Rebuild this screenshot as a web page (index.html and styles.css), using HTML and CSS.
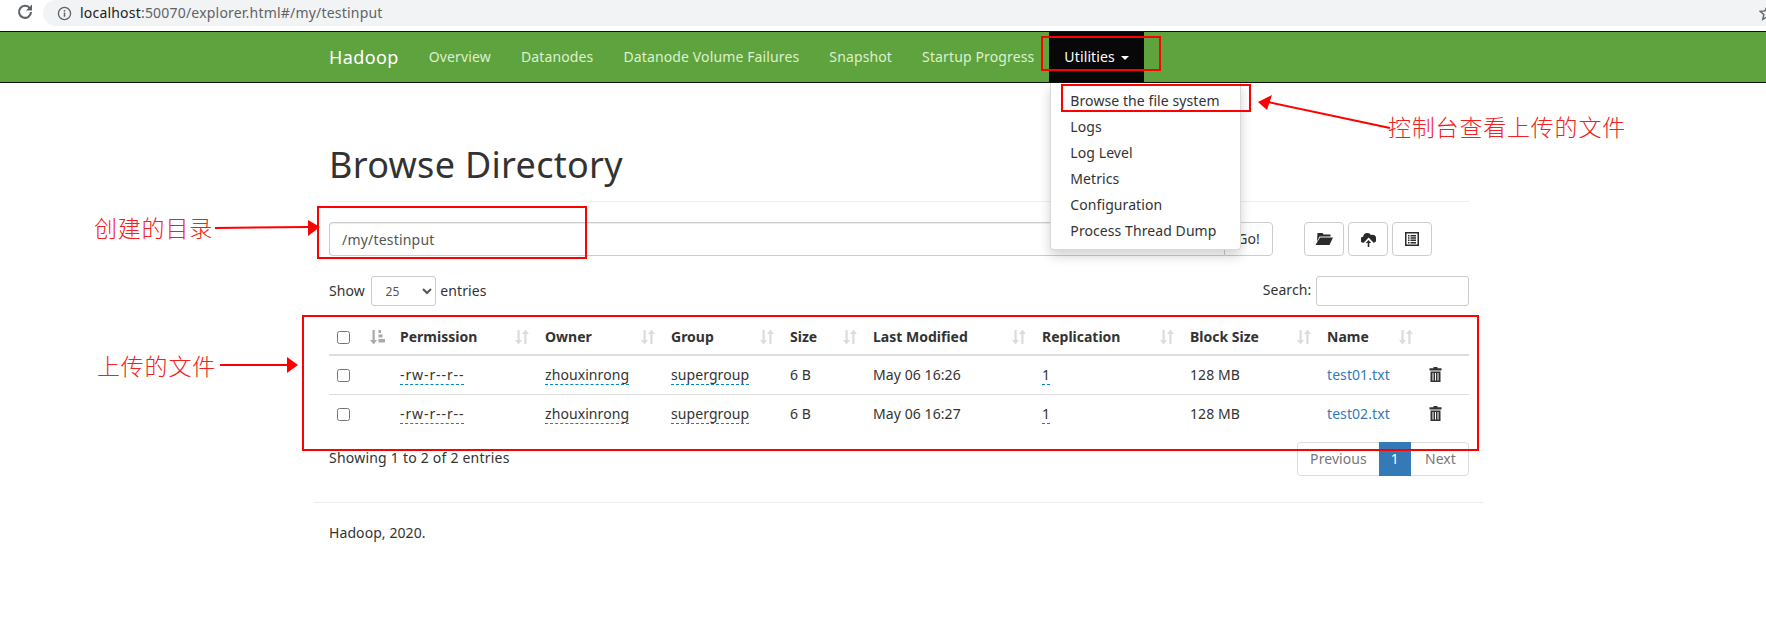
FILE: index.html
```html
<!DOCTYPE html>
<html lang="en">
  <head>
    <meta charset="UTF-8" />
    <title>Browsing HDFS</title>
    <link rel="stylesheet" href="styles.css">
  </head>
  <body>
    <svg class="sprite" xmlns="http://www.w3.org/2000/svg">
      <symbol id="sort" viewBox="0 0 14 16">
        <path d="M2.500 1h2.200v10H7l-3.400 4.400L0 11h2.500z" />
        <path d="M9.300 15h2.200V5H14L10.400.6 7 5h2.300z" />
      </symbol>
      <symbol id="sort-active" viewBox="0 0 15 16">
        <path d="M2.500 1h2.200v10H7l-3.400 4.400L0 11h2.500z" />
        <path d="M8.500 1h2.500v3H8.500zM8.500 5.500h4v3h-4zM8.500 10h6.500v3.500H8.500z" />
      </symbol>
      <symbol id="trash" viewBox="0 0 13 15">
        <path d="M4.500 0h4v1.200h4V3.500H.5V1.200h4zM1.500 4.500h10V15h-10zM3.500 6v7.500h1V6zM6 6v7.500h1V6zM8.500 6v7.500h1V6z" fill-rule="evenodd" />
      </symbol>
    </svg>

    <div class="chrome-bar">
      <svg class="reload" viewBox="0 0 16 16">
        <path d="M13 4.500A6 6 0 1 0 14 8" fill="none" stroke="#5f6368" stroke-width="2.100" />
        <path d="M15 .5v6H9z" fill="#5f6368" />
      </svg>
      <div class="omnibox">
        <svg class="info" viewBox="0 0 16 16">
          <circle cx="8" cy="8" r="6.500" fill="none" stroke="#5f6368" stroke-width="1.400" />
          <path d="M7.200 7h1.600v4.500H7.200zM7.200 4.200h1.600v1.600H7.200z" fill="#5f6368" />
        </svg>
        <span class="url">localhost<span class="url-rest">:50070/explorer.html#/my/testinput</span></span>
        <svg class="star" viewBox="0 0 16 16">
          <path d="M8 1.500l2 4.400 4.700.5-3.500 3.200 1 4.700L8 11.900l-4.200 2.400 1-4.700-3.500-3.200 4.700-.5z" fill="none" stroke="#5f6368" stroke-width="1.400" />
        </svg>
      </div>
    </div>

    <nav class="navbar">
      <div class="navbar-inner">
        <a class="brand">Hadoop</a>
        <ul class="nav">
          <li><a>Overview</a></li>
          <li><a>Datanodes</a></li>
          <li><a>Datanode Volume Failures</a></li>
          <li><a>Snapshot</a></li>
          <li><a>Startup Progress</a></li>
          <li class="open">
            <a>Utilities <span class="caret"></span></a>
            <ul class="dropdown">
              <li>Browse the file system</li>
              <li>Logs</li>
              <li>Log Level</li>
              <li>Metrics</li>
              <li>Configuration</li>
              <li>Process Thread Dump</li>
            </ul>
          </li>
        </ul>
      </div>
    </nav>

    <main class="container">
      <div class="page-header">
        <h1>Browse Directory</h1>
      </div>

      <div class="toolbar">
        <div class="input-group">
          <input class="path-input" type="text" value="/my/testinput" />
          <button class="btn go-btn">Go!</button>
        </div>
        <div class="tools">
          <button class="btn tool-btn">
            <svg class="icon-folder" viewBox="0 0 18 12">
              <path d="M2.500 0h5l1 1.500h7V3.500H4.500L2 8.500z" />
              <path d="M5 4.500h13L14.500 12H0.500z" />
            </svg>
          </button>
          <button class="btn tool-btn">
            <svg class="icon-upload" viewBox="0 0 15 15">
              <path d="M2.800 10.800a3 3 0 0 1-.6-6A4.200 4.200 0 0 1 10 3a3.300 3.300 0 0 1 2.600 7.800l-5-5.400z" />
              <path d="M6.700 15v-4H4.800l2.700-3 2.700 3H8.300v4z" />
            </svg>
          </button>
          <button class="btn tool-btn">
            <svg class="icon-list" viewBox="0 0 14 14">
              <path d="M0 0h14v14H0zM1.500 1.500v11h11v-11zM3 3h1.500v1.500H3zM5.500 3H11v1.500H5.500zM3 5.300h1.500v1.500H3zM5.500 5.300H11v1.500H5.500zM3 7.600h1.500v1.500H3zM5.500 7.600H11v1.500H5.500zM3 9.900h1.500v1.500H3zM5.500 9.900H11v1.500H5.500z" fill-rule="evenodd" />
            </svg>
          </button>
        </div>
      </div>

      <div class="table-controls">
        <label class="length">Show
          <select class="length-select"><option>25</option></select>
          entries</label>
        <label class="search">Search: <input class="search-input" type="text" /></label>
      </div>

      <table class="files">
        <colgroup>
          <col class="c-check" /><col class="c-sort" /><col class="c-perm" /><col class="c-owner" />
          <col class="c-group" /><col class="c-size" /><col class="c-date" /><col class="c-repl" />
          <col class="c-block" /><col class="c-name" /><col class="c-del" />
        </colgroup>
        <thead>
          <tr>
            <th><input type="checkbox" /></th>
            <th><svg class="sort-active"><use href="#sort-active" /></svg></th>
            <th><div class="th-in">Permission<svg class="sort"><use href="#sort" /></svg></div></th>
            <th><div class="th-in">Owner<svg class="sort"><use href="#sort" /></svg></div></th>
            <th><div class="th-in">Group<svg class="sort"><use href="#sort" /></svg></div></th>
            <th><div class="th-in">Size<svg class="sort"><use href="#sort" /></svg></div></th>
            <th><div class="th-in">Last Modified<svg class="sort"><use href="#sort" /></svg></div></th>
            <th><div class="th-in">Replication<svg class="sort"><use href="#sort" /></svg></div></th>
            <th><div class="th-in">Block Size<svg class="sort"><use href="#sort" /></svg></div></th>
            <th><div class="th-in">Name<svg class="sort"><use href="#sort" /></svg></div></th>
            <th></th>
          </tr>
        </thead>
        <tbody>
          <tr>
            <td><input type="checkbox" /></td>
            <td></td>
            <td><span class="editable perm">-rw-r--r--</span></td>
            <td><span class="editable">zhouxinrong</span></td>
            <td><span class="editable">supergroup</span></td>
            <td>6 B</td>
            <td>May 06 16:26</td>
            <td><span class="editable">1</span></td>
            <td>128 MB</td>
            <td><a class="file-link">test01.txt</a></td>
            <td><svg class="trash"><use href="#trash" /></svg></td>
          </tr>
          <tr>
            <td><input type="checkbox" /></td>
            <td></td>
            <td><span class="editable perm">-rw-r--r--</span></td>
            <td><span class="editable">zhouxinrong</span></td>
            <td><span class="editable">supergroup</span></td>
            <td>6 B</td>
            <td>May 06 16:27</td>
            <td><span class="editable">1</span></td>
            <td>128 MB</td>
            <td><a class="file-link">test02.txt</a></td>
            <td><svg class="trash"><use href="#trash" /></svg></td>
          </tr>
        </tbody>
      </table>

      <div class="table-footer">
        <div class="info-text">Showing 1 to 2 of 2 entries</div>
        <ul class="pagination">
          <li>Previous</li>
          <li class="active">1</li>
          <li class="next">Next</li>
        </ul>
      </div>

      <hr class="footer-rule" />
      <footer class="footer">Hadoop, 2020.</footer>
    </main>

    <!-- red notes drawn over the screenshot -->
    <svg class="notes" viewBox="0 0 1766 642">
      <g fill="none" stroke="#f00" stroke-width="2">
        <rect x="318" y="207" width="268" height="51" />
        <rect x="1042" y="37" width="118" height="33" />
        <rect x="1062" y="85" width="188" height="26" />
        <rect x="303" y="316" width="1175" height="134" />
        <path d="M215 228L309 227" />
        <path d="M1390 128L1268 102" />
        <path d="M220 365H288" />
      </g>
      <g fill="#f00">
        <polygon points="320,227 308,220 308,236" />
        <polygon points="1258,102 1272,95 1267,110" />
        <polygon points="298,365 287,357 287,373" />
      </g>
    </svg>
    <span class="note note-dir">创建的目录</span>
    <span class="note note-files">上传的文件</span>
    <span class="note note-console">控制台查看上传的文件</span>
  </body>
</html>
```

FILE: styles.css
```css
body {
  font-family: "Noto Sans", "Noto Sans CJK SC", sans-serif;
  font-size: 14px;
  line-height: 20px;
  letter-spacing: 0.08px;
  color: #333;
  background-color: white;
  margin: 0;
  padding: 0;
  position: relative;
  height: 642px;
  overflow: hidden;
}
.sprite {
  display: none;
}
.chrome-bar {
  height: 31px;
  display: flex;
  align-items: flex-start;
}
.reload {
  width: 16px;
  height: 16px;
  margin: 4px 10px 0 17px;
  flex: none;
}
.omnibox {
  flex: 1;
  height: 26px;
  background-color: #f1f3f4;
  border-radius: 13px 0 0 13px;
  display: flex;
  align-items: center;
  padding-left: 14px;
}
.info {
  width: 15px;
  height: 15px;
  margin-right: 8px;
}
.url {
  color: #202124;
  font-size: 14px;
  letter-spacing: 0.2px;
  flex: 1;
}
.url-rest {
  color: #5f6368;
}
.star {
  width: 16px;
  height: 16px;
  margin-right: -9px;
}
.navbar {
  height: 50px;
  background-color: #5fa33e;
  border-top: 1px solid #101010;
  border-bottom: 1px solid #101010;
}
.navbar-inner {
  margin-left: 329px;
  display: flex;
  height: 50px;
}
.brand {
  color: white;
  font-size: 18px;
  line-height: 50px;
  letter-spacing: 0.4px;
  margin-right: 15px;
}
.nav {
  display: flex;
  list-style: none;
  margin: 0;
  padding: 0;
}
.nav > li {
  position: relative;
}
.nav > li > a {
  display: block;
  padding: 15px;
  color: #ddf0cf;
  letter-spacing: 0.13px;
}
.nav > li.open > a {
  background-color: #080808;
  color: white;
  height: 20px;
}
.caret {
  display: inline-block;
  width: 0;
  height: 0;
  margin-left: 2px;
  vertical-align: middle;
  border-top: 4px solid white;
  border-left: 4px solid transparent;
  border-right: 4px solid transparent;
}
.dropdown {
  position: absolute;
  z-index: 5;
  top: 51px;
  left: 1px;
  width: 191px;
  margin: 0;
  padding: 5px 0;
  list-style: none;
  background-color: white;
  border: 1px solid rgba(0, 0, 0, 0.15);
  border-top: none;
  border-radius: 0 0 4px 4px;
  box-shadow: 0 6px 12px rgba(0, 0, 0, 0.175);
  box-sizing: border-box;
}
.dropdown li {
  padding: 3px 19px;
  white-space: nowrap;
}
.container {
  width: 1140px;
  margin-left: 314px;
  padding: 0 15px;
}
.page-header {
  height: 119px;
  box-sizing: border-box;
  border-bottom: 1px solid #eee;
  margin-bottom: 20px;
}
h1 {
  font-size: 36px;
  font-weight: 400;
  line-height: 40px;
  letter-spacing: 0.3px;
  margin: 0;
  padding-top: 62px;
}
.toolbar {
  display: flex;
  height: 34px;
}
.input-group {
  display: flex;
  width: 944px;
}
.path-input {
  flex: 1;
  min-width: 0;
  font: inherit;
  letter-spacing: 0.2px;
  color: #555;
  padding: 7px 12px 5px;
  border: 1px solid #ccc;
  border-right: none;
  border-radius: 4px 0 0 4px;
  box-shadow: inset 0 1px 1px rgba(0, 0, 0, 0.075);
  box-sizing: border-box;
}
.btn {
  font: inherit;
  color: #333;
  background-color: white;
  border: 1px solid #ccc;
  border-radius: 4px;
  padding: 0;
  height: 34px;
  box-sizing: border-box;
  display: flex;
  align-items: center;
  justify-content: center;
}
.go-btn {
  width: 49px;
  border-radius: 0 4px 4px 0;
}
.tools {
  display: flex;
  gap: 4px;
  margin-left: 31px;
}
.tool-btn {
  width: 40px;
}
.tool-btn svg {
  fill: #2b2b2b;
}
.icon-folder {
  width: 18px;
  height: 12px;
}
.icon-upload {
  width: 15px;
  height: 15px;
}
.icon-list {
  width: 14px;
  height: 14px;
}
.table-controls {
  display: flex;
  justify-content: space-between;
  align-items: center;
  height: 30px;
  margin-top: 20px;
}
.length-select {
  width: 65px;
  height: 30px;
  font: inherit;
  font-size: 12px;
  color: #555;
  background-color: white;
  border: 1px solid #ccc;
  border-radius: 3px;
  padding: 0 10px;
  margin: 0 1px 0 2px;
}
.search-input {
  width: 153px;
  height: 30px;
  border: 1px solid #ccc;
  border-radius: 3px;
  box-sizing: border-box;
  margin-left: 1px;
  vertical-align: middle;
}
.files {
  table-layout: fixed;
  width: 1140px;
  border-collapse: collapse;
  margin-top: 12px;
}
.c-check { width: 33px; }
.c-sort { width: 30px; }
.c-perm { width: 145px; }
.c-owner { width: 126px; }
.c-group { width: 119px; }
.c-size { width: 83px; }
.c-date { width: 169px; }
.c-repl { width: 148px; }
.c-block { width: 137px; }
.c-name { width: 102px; }
.c-del { width: 48px; }
.files th {
  padding: 9px 8px 7px;
  text-align: left;
  height: 20px;
  font-weight: 700;
  letter-spacing: 0;
  border-bottom: 2px solid #ddd;
}
.files td {
  padding: 9px 8px;
  height: 20px;
  border-top: 1px solid #ddd;
}
.files tbody tr:first-child td {
  border-top: none;
}
.files input[type="checkbox"] {
  margin: 0;
  width: 13px;
  height: 13px;
  display: block;
}
.th-in {
  display: flex;
  justify-content: space-between;
  align-items: center;
  white-space: nowrap;
}
.sort {
  width: 14px;
  height: 16px;
  fill: #dcdcdc;
  flex: none;
}
.sort-active {
  width: 15px;
  height: 16px;
  fill: #a9a9a9;
  display: block;
}
.editable {
  border-bottom: 1px dashed #08c;
  display: inline-block;
  line-height: 19px;
}
.perm {
  letter-spacing: 0.9px;
}
.file-link {
  color: #337ab7;
}
.trash {
  width: 13px;
  height: 15px;
  fill: #333;
  display: block;
  margin-top: -2px;
}
.table-footer {
  display: flex;
  justify-content: space-between;
  align-items: flex-start;
  margin-top: 9px;
}
.info-text {
  padding-top: 6px;
  letter-spacing: 0.22px;
}
.pagination {
  display: flex;
  list-style: none;
  margin: 0;
  padding: 0;
  height: 34px;
  border: 1px solid #ddd;
  border-radius: 4px;
  box-sizing: border-box;
  color: #777;
}
.pagination li {
  padding: 6px 12px;
  line-height: 20px;
}
.pagination .active {
  background-color: #337ab7;
  color: white;
  margin: -1px 0;
  padding: 7px 12px;
}
.pagination .next {
  padding-left: 14px;
}
.footer-rule {
  border: none;
  border-top: 1px solid #eee;
  margin: 26px -15px 20px;
}
.footer {
  line-height: 20px;
}
.notes {
  position: absolute;
  z-index: 10;
  top: 0;
  left: 0;
  width: 1766px;
  height: 642px;
  pointer-events: none;
}
.note {
  position: absolute;
  z-index: 11;
  color: #f32020;
  font-family: "Noto Sans CJK SC", sans-serif;
  font-size: 23px;
  font-weight: 300;
  line-height: 24px;
  white-space: nowrap;
  letter-spacing: 0.8px;
}
.note-dir {
  left: 94px;
  top: 215px;
}
.note-files {
  left: 97px;
  top: 353px;
}
.note-console {
  left: 1388px;
  top: 114px;
}
```
